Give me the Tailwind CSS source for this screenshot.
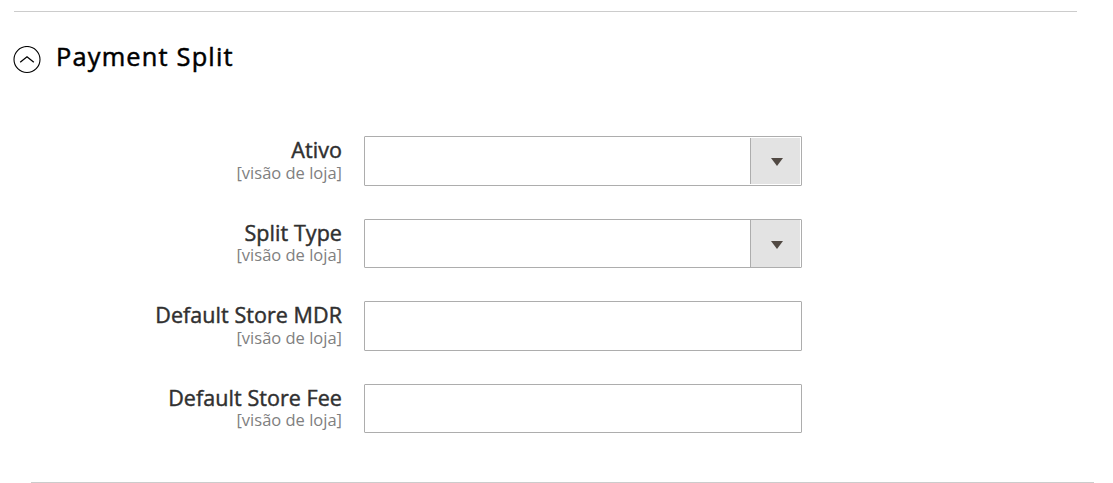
<!DOCTYPE html>
<html lang="pt-BR"><head><meta charset="utf-8"><title>Payment Split</title>
<script src="https://cdn.jsdelivr.net/npm/@tailwindcss/browser@4"></script></head>
<body class="bg-white font-['Open_Sans',sans-serif] overflow-hidden">
<main class="h-[483px] flex flex-col pt-[11px]">
<hr class="ml-[14px] mr-9 border-[#cccccc]">
<header class="flex items-center gap-[15px] pl-[13px] mt-7 h-8">
<svg class="w-7 h-7 mt-[7px]" viewBox="0 0 28 28" fill="none" stroke="#000"><circle cx="14" cy="13.5" r="13" stroke-width="1.1"/><path d="M7.2 16.2L14 10.8L20.8 16.2" stroke-width="1.3"/></svg>
<h1 class="text-[25.4px] leading-8 font-normal tracking-[1.18px] [-webkit-text-stroke:0.5px_#000] text-black">Payment Split</h1>
</header>
<form class="mt-16 flex flex-col gap-[33px]">
<div class="flex h-[50px] gap-[22px]"><div class="w-[342px] text-right"><label class="block text-[21.5px] leading-[28px] tracking-[0.06px] [-webkit-text-stroke:0.45px_#303030] text-[#303030]">Ativo</label><span class="block text-[16.5px] leading-[18px] text-[#808080]">[visão de loja]</span></div><div class="w-[438px] border border-[#adadad] rounded-[1px] flex justify-end p-px pl-0"><div class="w-[50px] border-l border-[#adadad] bg-[#e3e3e3] flex items-center justify-center pl-0.5 pt-0.5"><svg class="w-3 h-2" viewBox="0 0 12 8"><path d="M0 0H12L6 8Z" fill="#514943"/></svg></div></div></div>
<div class="flex h-[49px] gap-[22px]"><div class="w-[342px] text-right"><label class="block text-[21.5px] leading-[28px] tracking-[0.06px] [-webkit-text-stroke:0.45px_#303030] text-[#303030]">Split Type</label><span class="block text-[16.5px] leading-4 text-[#808080]">[visão de loja]</span></div><div class="w-[438px] border border-[#adadad] rounded-[1px] flex justify-end pr-px"><div class="w-[50px] border-l border-[#adadad] bg-[#e3e3e3] flex items-center justify-center pl-0.5 pt-[3px]"><svg class="w-3 h-2" viewBox="0 0 12 8"><path d="M0 0H12L6 8Z" fill="#514943"/></svg></div></div></div>
<div class="flex h-[50px] gap-[22px]"><div class="w-[342px] text-right"><label for="mdr" class="block text-[21.5px] leading-[28px] tracking-[0.06px] [-webkit-text-stroke:0.45px_#303030] text-[#303030]">Default Store MDR</label><span class="block text-[16.5px] leading-[18px] text-[#808080]">[visão de loja]</span></div><input id="mdr" class="w-[438px] border border-[#adadad] rounded-[1px]"></div>
<div class="flex h-[49px] gap-[22px]"><div class="w-[342px] text-right"><label for="fee" class="block text-[21.5px] leading-[28px] tracking-[0.06px] [-webkit-text-stroke:0.45px_#303030] text-[#303030]">Default Store Fee</label><span class="block text-[16.5px] leading-4 text-[#808080]">[visão de loja]</span></div><input id="fee" class="w-[438px] border border-[#adadad] rounded-[1px]"></div>
</form>
<hr class="mt-auto ml-[31px] mr-[19px] border-[#cccccc]">
</main></body></html>
